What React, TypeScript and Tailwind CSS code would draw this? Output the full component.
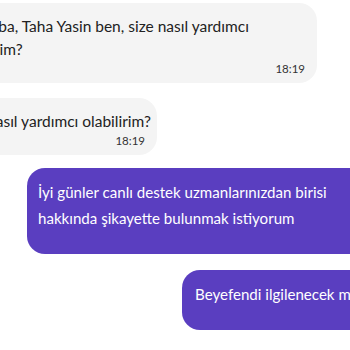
export default function App() {
  return (
    <div className="w-[350px] h-[350px] overflow-hidden bg-white flex flex-col font-['Lato',sans-serif]">
      {/* incoming */}
      <div className="self-start -ml-[58px] mt-[3px] w-[375px] shrink-0 rounded-[18px] bg-[#f4f4f4] pl-3 pr-3 pt-3 pb-[7px] text-[#222]">
        <p className="whitespace-nowrap text-[15.5px] leading-[23px]">
          Merhaba, Taha Yasin ben, size nasıl yardımcı
          <br />
          olabilirim?
        </p>
        <div className="text-right text-[11.5px] leading-[15px] text-[#333]">18:19</div>
      </div>

      <div className="self-start -ml-[56px] mt-[15px] w-[213px] shrink-0 rounded-[18px] bg-[#f4f4f4] pl-3 pr-3 pt-3 pb-[7px] text-[#222]">
        <p className="whitespace-nowrap text-[15.5px] leading-[23px]">Size nasıl yardımcı olabilirim?</p>
        <div className="text-right text-[11.5px] leading-[15px] text-[#333]">18:19</div>
      </div>

      {/* outgoing */}
      <div className="ml-[27px] -mr-[90px] mt-[13px] shrink-0 rounded-[18px] bg-[#5a3ec0] pl-[11px] pr-3 pt-[11px] pb-[7px] text-white">
        <p className="whitespace-nowrap text-[15.1px] leading-[26px]">
          İyi günler canlı destek uzmanlarınızdan birisi
          <br />
          hakkında şikayette bulunmak istiyorum
        </p>
        <div className="text-right text-[11.5px] leading-[16px] text-white/80">18:20</div>
      </div>

      <div className="ml-[182px] -mr-[90px] mt-[16px] shrink-0 rounded-[18px] bg-[#5a3ec0] pl-[13px] pr-3 pt-[11px] pb-[7px] text-white">
        <p className="whitespace-nowrap text-[15.1px] leading-[26px]">Beyefendi ilgilenecek misiniz?</p>
        <div className="text-right text-[11.5px] leading-[16px] text-white/80">18:21</div>
      </div>
    </div>
  );
}
